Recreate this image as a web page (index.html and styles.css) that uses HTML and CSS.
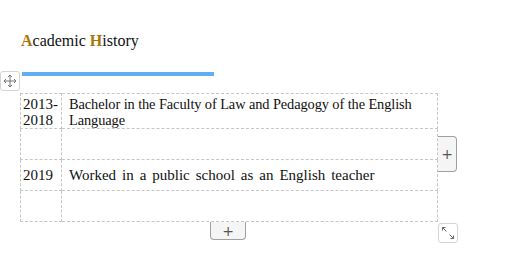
FILE: index.html
```html
<!DOCTYPE html>
<html lang="en">
<head>
    <meta charset="UTF-8">
    <meta name="viewport" content="width=device-width, initial-scale=1.0">
    <title>Academic History</title>
    <link rel="stylesheet" href="styles.css">
</head>
<body>
<main class="page">
	<section class="block">
		<h2 class="title"><span class="cap">A</span>cademic <span class="cap">H</span>istory</h2>
		<div class="rule"></div>
		<!-- editable table with its editor handles -->
		<div class="tablebox">
			<span class="handle move">
				<svg width="14" height="14" viewBox="0 0 14 14" fill="none" stroke="#777" stroke-width="1">
					<path d="M7 1v12M1 7h12"/>
					<path d="M5 3l2-2 2 2M5 11l2 2 2-2M3 5L1 7l2 2M11 5l2 2-2 2"/>
				</svg>
			</span>
			<table class="grid">
				<tr class="tall">
					<td class="year">2013-<br>2018</td>
					<td class="long">Bachelor in the Faculty of Law and Pedagogy of the English Language</td>
				</tr>
				<tr><td class="year"></td><td></td></tr>
				<tr>
					<td class="year">2019</td>
					<td class="wide">Worked in a public school as an English teacher</td>
				</tr>
				<tr><td class="year"></td><td></td></tr>
			</table>
			<span class="addcol">+</span>
			<span class="addrow">+</span>
			<span class="handle resize">
				<svg width="14" height="14" viewBox="0 0 14 14" fill="none" stroke="#666" stroke-width="1">
					<path d="M1.5 1.5l4 4M1.5 1.5h3M1.5 1.5v3"/>
					<path d="M12.5 12.5l-4-4M12.5 12.5h-3M12.5 12.5v-3"/>
				</svg>
			</span>
		</div>
	</section>
	<section class="block">
		<h2 class="title"><span class="cap">S</span>kills</h2>
	</section>
</main>
</body>
</html>
```
FILE: styles.css
```css
*{margin: 0;padding: 0;box-sizing: border-box;}
body{font-family: "Liberation Serif", "Times New Roman", serif;color: #111;background: #fff;}
.page{padding: 33px 0 0 20px;}
.title{font-size: 16px;font-weight: normal;line-height: 16px;padding-left: 1px;}
.cap{color: #a8760c;font-weight: bold;}
.rule{width: 192px;height: 4px;background: #62aef3;margin: 23px 0 0 2px;}
.tablebox{position: relative;width: 418px;margin-top: 17px;}
.grid{width: 418px;border-collapse: collapse;font-size: 15px;line-height: 16px;}
.grid td{border: 1px dashed #c6c6c6;padding: 0 0 0 7px;height: 31px;vertical-align: middle;}
.grid td.year{width: 41px;padding-left: 2px;}
.grid tr.tall td{height: 35px;padding-top: 1px;}
.grid td.long{font-size: 14.4px;letter-spacing: -0.1px;}
.grid td.wide{word-spacing: 2.2px;}
.handle{position: absolute;width: 20px;height: 20px;border: 1px solid #d4d4d4;border-radius: 3px;background: #fff;display: flex;align-items: center;justify-content: center;}
.move{left: -20px;top: -22px;}
.resize{right: -20px;bottom: -21px;}
.addcol,.addrow{position: absolute;background: #f5f5f5;border: 1px solid #a0a0a0;color: #555;font-family: "DejaVu Sans", sans-serif;font-size: 14px;display: flex;align-items: center;justify-content: center;}
.addcol{right: -19px;top: 43px;width: 19px;height: 36px;border-left: none;border-radius: 0 4px 4px 0;}
.addrow{left: 190px;bottom: -18px;width: 36px;height: 18px;border-top: none;border-radius: 0 0 4px 4px;}
.block + .block{margin-top: 31px;}
```
